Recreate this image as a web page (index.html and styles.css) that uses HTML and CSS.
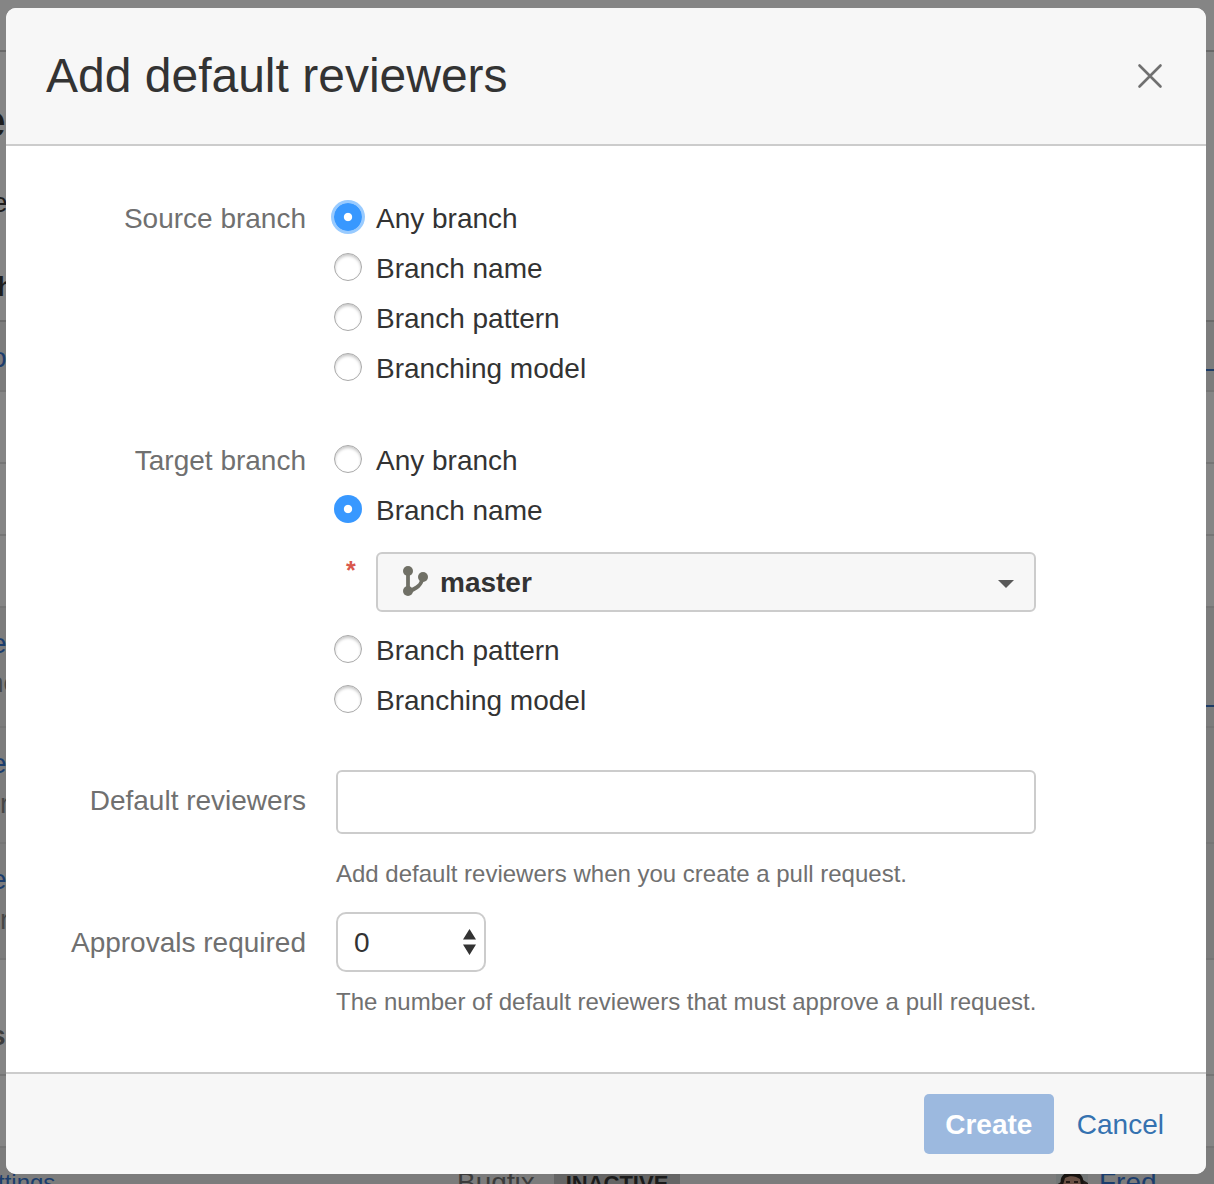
FILE: index.html
```html
<!DOCTYPE html>
<html lang="en">
<head>
<meta charset="utf-8">
<title>Add default reviewers</title>
<link rel="stylesheet" href="styles.css">
</head>
<body>
<div class="page">
  <div class="page-bar"></div>
  <div class="page-head">
    <div class="page-title">e</div>
    <div class="page-intro">e</div>
    <div class="page-heading">h</div>
  </div>
  <div class="row tinted repo"><span class="link">o</span><span class="rule"></span></div>
  <div class="row mid"></div>
  <div class="row mid"></div>
  <div class="row mid"></div>
  <div class="row tinted entry first"><span class="link">e</span><span class="rule lower"></span><span class="note wide">nc</span></div>
  <div class="row tinted entry"><span class="link">e</span><span class="note">r</span></div>
  <div class="row tinted entry"><span class="link">e</span><span class="note">r</span></div>
  <div class="row section"><span class="strong">s</span></div>
  <div class="row mid"></div>
  <div class="row tinted last">
    <span class="link nav">ttings</span>
    <span class="kind">Bugfix</span>
    <span class="badge">INACTIVE</span>
    <svg class="avatar" viewBox="0 0 32 32" width="32" height="32">
      <rect width="32" height="32" rx="4" fill="#737777"/>
      <path d="M0 32V13l5-3v22zM27 8l5 3v21h-5z" fill="#211b18"/>
      <path d="M7 14C6 4 10 2 16 2s12 3 9 14l-1 9c-3 6-12 6-15 0z" fill="#695044"/>
      <path d="M5 13C3 4 9 0 16 0s13 3 11 14l-2-1-1-6c-4-3-10-4-15-1l-2 7z" fill="#171310"/>
      <path d="M10 10h4M18 10h4" stroke="#211714" stroke-width="2"/>
    </svg>
    <span class="link">Fred</span>
  </div>
</div>

<div class="dialog">
  <header class="dialog-header">
    <h1>Add default reviewers</h1>
    <svg class="close" width="26" height="26" viewBox="0 0 26 26"><path d="M2.500 2.500l21 21M23.500 2.500l-21 21" fill="none" stroke="#707070" stroke-width="2.600" stroke-linecap="round"/></svg>
  </header>
  <form class="dialog-body">
    <div class="field">
      <div class="label">Source branch</div>
      <div class="control">
        <label class="option"><input class="radio focused" type="radio" name="source" checked>Any branch</label>
        <label class="option"><input class="radio" type="radio" name="source">Branch name</label>
        <label class="option"><input class="radio" type="radio" name="source">Branch pattern</label>
        <label class="option"><input class="radio" type="radio" name="source">Branching model</label>
      </div>
    </div>
    <div class="field target">
      <div class="label">Target branch</div>
      <div class="control">
        <label class="option"><input class="radio" type="radio" name="target">Any branch</label>
        <label class="option"><input class="radio" type="radio" name="target" checked>Branch name</label>
        <div class="branch-picker">
          <span class="required">*</span>
          <div class="branch-select">
            <svg width="26" height="30" viewBox="0 0 26 30">
              <g fill="none" stroke="#707066" stroke-width="3.800"><path d="M6 5v20"/><path d="M20.500 11C20 19 15 22 6 26"/></g>
              <g fill="#707066"><circle cx="6" cy="5" r="5"/><circle cx="6" cy="25" r="5"/><circle cx="21" cy="11" r="5"/></g>
            </svg>
            <span class="branch-name">master</span>
            <svg class="caret" width="16" height="8" viewBox="0 0 16 8"><path d="M0 0h16L8 8z" fill="#595959"/></svg>
          </div>
        </div>
        <label class="option"><input class="radio" type="radio" name="target">Branch pattern</label>
        <label class="option"><input class="radio" type="radio" name="target">Branching model</label>
      </div>
    </div>
    <div class="field reviewers">
      <div class="label">Default reviewers</div>
      <div class="control">
        <div class="text-input"></div>
        <p class="description">Add default reviewers when you create a pull request.</p>
      </div>
    </div>
    <div class="field approvals">
      <div class="label">Approvals required</div>
      <div class="control">
        <div class="count-select">
          <span class="count">0</span>
          <svg width="13" height="26" viewBox="0 0 13 26"><path d="M0 10.500L6.500 0 13 10.500zM0 15.500h13L6.500 26z" fill="#333"/></svg>
        </div>
        <p class="description">The number of default reviewers that must approve a pull request.</p>
      </div>
    </div>
  </form>
  <footer class="dialog-footer">
    <div class="button">Create</div>
    <div class="cancel">Cancel</div>
  </footer>
</div>
</body>
</html>
```

FILE: styles.css
```css
* { box-sizing: border-box; }

body {
  margin: 0;
  height: 1184px;
  overflow: hidden;
  position: relative;
  font: 28px/32px "Liberation Sans", Arial, sans-serif;
  color: #333;
}

/* Dimmed page behind the dialog */
.page { height: 1184px; overflow: hidden; background: #858585; color: #1d1d1d; }
.page-bar { height: 52px; border-bottom: 2px solid #696969; }
.page-head { height: 268px; padding-top: 53px; }
.page-title { margin-left: -20px; font-size: 46px; font-weight: bold; }
.page-intro { margin: 50px 0 0 -8px; }
.page-heading { margin: 52px 0 0 -3px; font-weight: bold; }
.row { border-top: 2px solid #757575; display: flex; }
.tinted { background: #7c7c7c; }
.mid { height: 72px; }
.repo { height: 70px; border-color: #6a6a6a; padding-top: 20px; justify-content: space-between; }
.rule { width: 8px; height: 2px; margin-top: 27px; background: #1d3b66; }
.repo .link { margin-left: -9px; }
.link { color: #1b3d6d; }
.entry { height: 116px; display: grid; grid-template-columns: 1fr 8px; align-content: start; row-gap: 8px; padding-top: 20px; }
.entry .link { margin-left: -9px; }
.note { grid-column: 1; color: #464646; }
.note.wide { margin-left: -12px; }
.first { height: 120px; row-gap: 7px; }
.lower { margin-top: 77px; margin-bottom: -79px; }
.section { height: 116px; padding-top: 60px; }
.strong { margin-left: -10px; font-weight: bold; color: #3d3d3d; }
.last { height: 72px; padding-top: 19px; }
.nav { width: 459px; margin-left: -2px; flex: none; font-size: 24px; }
.kind { width: 97px; flex: none; color: #3b3b3b; }
.badge { width: 126px; height: 36px; flex: none; background: #656565; color: #1b1b1b; font-size: 22px; line-height: 34px; font-weight: bold; text-align: center; }
.avatar { margin: 5px 11px 0 376px; flex: none; }

/* Dialog */
.dialog {
  position: absolute;
  left: 6px;
  top: 8px;
  width: 1200px;
  height: 1166px;
  display: flex;
  flex-direction: column;
  background: #fff;
  border-radius: 10px;
  overflow: hidden;
}
.dialog-header {
  height: 138px;
  padding: 0 43px 0 40px;
  display: flex;
  align-items: center;
  justify-content: space-between;
  background: #f7f7f7;
  border-bottom: 2px solid #ccc;
}
h1 { margin: 0; font-size: 48px; line-height: 56px; font-weight: normal; }
.dialog-body { flex: 1; padding-top: 47px; }
.field { display: grid; grid-template-columns: 300px 700px; column-gap: 30px; }
.label { text-align: right; line-height: 52px; color: #707070; }
.option { display: flex; align-items: center; height: 50px; line-height: 50px; padding-top: 2px; }
.radio {
  appearance: none;
  width: 28px;
  height: 28px;
  margin: -4px 14px 0 -2px;
  border: 1px solid #aaa;
  border-radius: 50%;
  background: #fff;
  box-shadow: inset 0 2px 3px rgba(0, 0, 0, .22);
}
.radio:checked { border: 0; box-shadow: none; background: radial-gradient(circle, #fff 3.7px, #3898ff 4.6px); }
.radio.focused { box-shadow: 0 0 0 3px #99cbff; }
.target { margin-top: 42px; }
.branch-picker { display: flex; height: 90px; padding-top: 17px; }
.required { width: 40px; padding: 2px 0 0 10px; color: #d9584d; font-size: 25px; font-weight: bold; }
.branch-select {
  width: 660px;
  height: 60px;
  padding: 0 20px 0 24px;
  display: flex;
  align-items: center;
  gap: 12px;
  background: #f7f7f7;
  border: 2px solid #ccc;
  border-radius: 6px;
  font-weight: bold;
}
.branch-select svg:first-child { margin-top: -2px; }
.branch-name, .count { padding-top: 2px; }
.branch-select .caret { margin: 3px 0 0 auto; }
.reviewers { margin-top: 45px; }
.reviewers .label, .approvals .label { padding-top: 5px; }
.text-input { height: 64px; border: 2px solid #ccc; border-radius: 6px; }
.description { margin: 0; font-size: 24px; line-height: 30px; color: #707070; white-space: nowrap; }
.reviewers .description { margin-top: 25px; }
.approvals { margin-top: 23px; }
.approvals .description { margin-top: 15px; }
.count-select {
  width: 150px;
  height: 60px;
  padding: 0 8px 0 16px;
  display: flex;
  align-items: center;
  justify-content: space-between;
  border: 2px solid #ccc;
  border-radius: 10px;
}
.dialog-footer {
  height: 102px;
  padding: 0 42px 0 0;
  display: flex;
  align-items: center;
  justify-content: flex-end;
  gap: 23px;
  background: #f7f7f7;
  border-top: 2px solid #ccc;
}
.button {
  width: 130px;
  height: 60px;
  line-height: 62px;
  text-align: center;
  border-radius: 5px;
  background: #9cb9df;
  color: #fff;
  font-weight: bold;
}
.cancel { color: #3572b0; padding-top: 2px; }
```
